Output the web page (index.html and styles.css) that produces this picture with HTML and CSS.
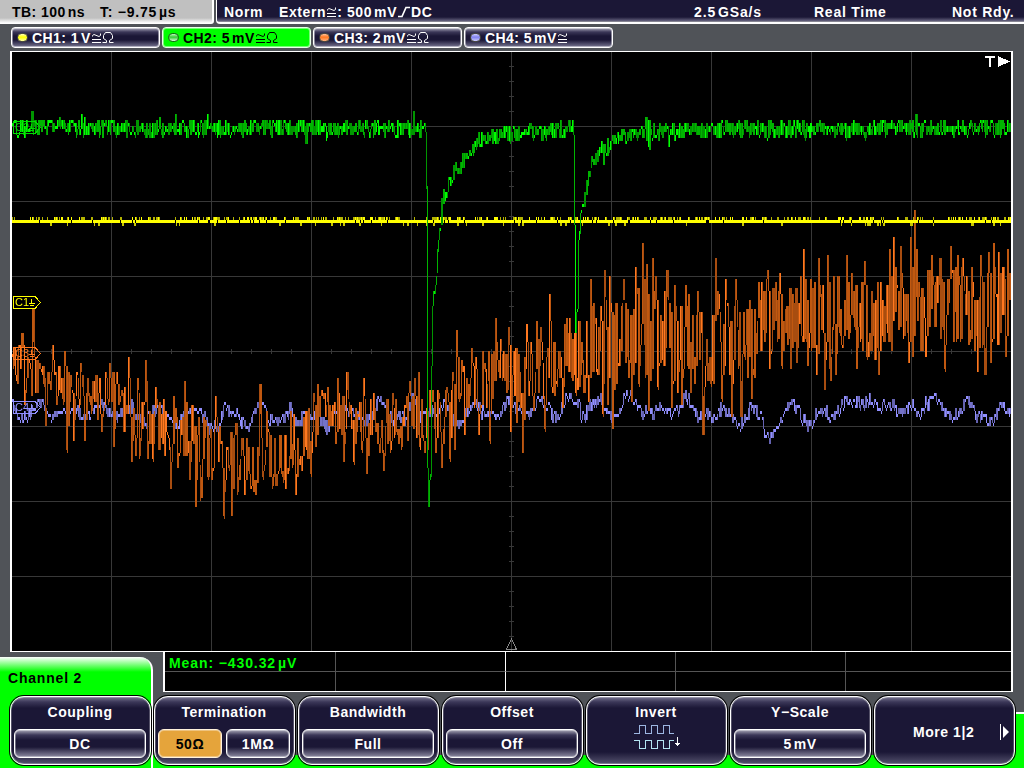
FILE: index.html
```html
<!DOCTYPE html>
<html lang="en">
<head>
<meta charset="utf-8">
<title>Oscilloscope</title>
<link rel="stylesheet" href="styles.css">
</head>
<body>
<div class="scope">
  <header class="status">
    <div class="timebase"><span class="tb">TB: 100<i></i>ns</span><span class="delay">T: −9.75<i></i>µs</span></div>
    <div class="trigger">
      <span class="norm">Norm</span>
      <span class="extern">Extern<svg class="couple" width="11" height="12"><use href="#acdc"/></svg>: 500<i></i>mV<svg class="edge" width="14" height="12"><path d="M1 10.5H5L9 1.5H13"/></svg>DC</span>
      <span class="rate">2.5<i></i>GSa/s</span><span class="mode">Real Time</span><span class="ready">Not Rdy.</span>
    </div>
  </header>
  <svg class="defs" width="0" height="0"><defs>
    <g id="acdc" fill="none" stroke="currentColor" stroke-width="1"><path d="M1.5 4.5V3.5L3 2.5L8 4.5L9.5 3.5V1.5M1 7.5H10M1 10.5H10"/></g>
    <g id="ohm" fill="none" stroke="currentColor" stroke-width="1"><path d="M.5 10.5H4.5V8.5L1.5 6.5V3.5L3.5 .5H8.5L10.5 3.5V6.5L7.5 8.5V10.5H11.5"/></g>
  </defs></svg>
  <nav class="channels">
    <div class="channel"><b class="led yellow"></b><span>CH1: 1<i></i>V</span><svg width="11" height="12"><use href="#acdc"/></svg><svg width="12" height="12"><use href="#ohm"/></svg></div>
    <div class="channel active"><b class="led green"></b><span>CH2: 5<i></i>mV</span><svg width="11" height="12"><use href="#acdc"/></svg><svg width="12" height="12"><use href="#ohm"/></svg></div>
    <div class="channel"><b class="led orange"></b><span>CH3: 2<i></i>mV</span><svg width="11" height="12"><use href="#acdc"/></svg><svg width="12" height="12"><use href="#ohm"/></svg></div>
    <div class="channel"><b class="led blue"></b><span>CH4: 5<i></i>mV</span><svg width="11" height="12"><use href="#acdc"/></svg></div>
  </nav>
  <main class="screen">
    <canvas id="plot" width="999" height="599"></canvas>
    <svg class="markers" width="999" height="599" viewBox="12 52 999 599" fill="none" shape-rendering="crispEdges">
      <g id="tags"></g>
      <path d="M985 57H995M990 57V67" stroke="#fff" stroke-width="2"/>
      <path d="M998 56V67L1010 61.5Z" fill="#fff"/>
      <path d="M511.5 639L506.5 649.5H516.5Z" stroke="#888"/>
    </svg>
  </main>
  <section class="bottom">
    <div class="tab">Channel 2</div>
    <div class="measure">
      <div class="cell">Mean: −430.32<i></i>µV</div><div class="cell"></div><div class="cell"></div><div class="cell"></div><div class="cell"></div>
      <div class="cell"></div><div class="cell"></div><div class="cell"></div><div class="cell"></div><div class="cell"></div>
    </div>
    <div class="keys">
      <div class="key"><span>Coupling</span><div class="opts"><div class="opt">DC</div></div></div>
      <div class="key"><span>Termination</span><div class="opts"><div class="opt on">50Ω</div><div class="opt">1MΩ</div></div></div>
      <div class="key"><span>Bandwidth</span><div class="opts"><div class="opt">Full</div></div></div>
      <div class="key"><span>Offset</span><div class="opts"><div class="opt">Off</div></div></div>
      <div class="key"><span>Invert</span><svg class="wave" width="48" height="26" fill="none" shape-rendering="crispEdges"><path stroke="#9db6e2" d="M0 9.5H5.5V1.5H11.5V9.5H17.5V1.5H23.5V9.5H29.5V1.5H35.5V9.5H40"/><path stroke="#b4e4f2" d="M0 16.5H5.5V24.5H11.5V16.5H17.5V24.5H23.5V16.5H29.5V24.5H35.5V16.5H40"/><path stroke="#fff" d="M43.5 13V22M41 19.5H46M42 20.5H45"/></svg></div>
      <div class="key"><span>Y−Scale</span><div class="opts"><div class="opt">5<i></i>mV</div></div></div>
      <div class="key more"><span>More 1|2</span><svg width="10" height="16"><path d="M.5 0V16" stroke="#fff"/><path d="M3 2V14L9 8Z" fill="#fff"/></svg></div>
    </div>
    <div class="corner"></div>
  </section>
</div>
<script src="traces.js"></script>
</body>
</html>
```

FILE: styles.css
```css
* { box-sizing: border-box; }
body { margin: 0; background: #505358; color: #fff; font: bold 14px/16px "Liberation Sans", Arial, sans-serif; letter-spacing: .65px; }
i { display: inline-block; width: 2px; }
.scope { width: 1024px; height: 768px; overflow: hidden; display: flex; flex-direction: column; }
.defs { position: absolute; }
.status { display: flex; gap: 2px; height: 24px; flex: none; white-space: nowrap; }
.timebase { width: 214px; background: linear-gradient(#c0c0c0 18px, #fff 23px); border-right: 2px solid #fff; border-bottom: 1px solid #fff; border-bottom-right-radius: 3px; padding: 4px 0 0 12px; display: flex; }
.tb { width: 88px; letter-spacing: .45px; }
.delay { letter-spacing: .75px; }
.timebase, .channel.active { color: #000; }
.trigger { flex: 1; display: flex; padding: 4px 0 0 7px; border-left: 1px solid #fff; border-bottom: 2px solid #fff; border-bottom-left-radius: 4px; background: linear-gradient(#1b1736 17px, #66637f 21px, #aaa 22px); }
.norm { width: 55px; }
.extern { width: 415px; letter-spacing: .6px; }
.rate { width: 120px; letter-spacing: .85px; }
.mode { width: 138px; letter-spacing: .75px; }
.ready { letter-spacing: .75px; }
.couple { vertical-align: -1px; }
.edge { fill: none; stroke: #fff; stroke-width: 1.7; vertical-align: -1px; }
.channels { display: flex; gap: 2px; height: 27px; padding: 3px 0 0 11px; flex: none; }
.channel { width: 149px; height: 21px; border: 1px solid #fff; box-shadow: inset 0 0 0 1px rgba(255,255,255,.45); border-radius: 4px; background: linear-gradient(#aaa9b9, #3b3758 4px, #1b1736 8px, #1b1736 12px, #777591); display: flex; align-items: center; padding-left: 5px; white-space: nowrap; letter-spacing: .45px; }
.channel span { margin-left: 4px; }
.channel svg { margin-top: 1px; }
.channel.active { background: #0f0; border-color: #e8ffe8; }
.led { width: 11px; height: 9px; border-radius: 5px; border: 1px solid #4d4d40; }
.yellow { background: linear-gradient(#ffb, #ff0 45%, #ffa); }
.green { background: linear-gradient(#bfb, #3c3 45%, #dfd); border-color: #166016; }
.orange { background: linear-gradient(#ffc09a, #ff7820 45%, #ffb080); }
.blue { background: linear-gradient(#ccf, #8080f0 45%, #ccf); }
.screen { flex: none; width: 1003px; height: 601px; margin-left: 10px; border: solid #fff; border-width: 1px 2px; display: grid; background: #000; }
.screen > * { grid-area: 1 / 1; display: block; }
.bottom { position: relative; height: 116px; flex: none; background: linear-gradient(#505358 103px, #0f0 103px); }
.tab { position: absolute; left: 0; top: 5px; width: 153px; height: 111px; padding: 13px 8px; border-right: 2px solid #fff; border-top-right-radius: 13px; background: linear-gradient(#fff, #0f0 15px); color: #000; letter-spacing: .8px; }
.measure { width: 850px; height: 40px; margin-left: 163px; border: 2px solid #fff; border-width: 0 2px 1px; background: #000; display: grid; grid-template: 20px 19px / 171px 170px 170px 170px auto; color: #0f0; letter-spacing: .9px; }
.cell { border: solid #555; border-width: 0 1px 1px 0; padding: 3px 4px 0; }
.cell:nth-child(5n+2) { border-right-color: #fff; }
.cell:nth-child(n+6) { border-bottom: 0; }
.cell:nth-child(5n) { border-right: 0; }
.keys { position: relative; z-index: 1; display: flex; gap: 3px; margin: 4px 0 0 10px; }
.key { width: 141px; height: 69px; border: 1px solid #fff; box-shadow: 0 0 0 1px #000, inset 0 0 0 1px rgba(255,255,255,.25); border-radius: 14px; background: linear-gradient(#77748f, #3b3758 5px, #1b1736 11px, #1b1736 55px, #55526e); padding: 7px 4px 0 3px; display: flex; flex-direction: column; align-items: center; letter-spacing: .55px; }
.opts { display: flex; gap: 4px; width: 132px; margin-top: 9px; }
.opt { flex: 1; height: 29px; border: 1px solid #fff; box-shadow: inset 0 0 0 1px rgba(255,255,255,.35); border-radius: 6px; text-align: center; padding-top: 6px; background: linear-gradient(#aaa9b9, #3b3758 5px, #1b1736 10px, #1b1736 17px, #8b89a0); }
.opt.on { background: #e5a43b; color: #000; border-color: #fff2dc; }
.wave { margin: 4px 0 0 4px; }
.more { flex-direction: row; padding: 2px 4px 0 38px; justify-content: space-between; }
.corner { position: absolute; right: 0; top: 60px; width: 10px; height: 56px; background: #0f0; border-top: 2px solid #fff; }
.tag { font: 11px "Liberation Sans", sans-serif; letter-spacing: 0; }
```

FILE: traces.js
```js
const ctx = document.getElementById('plot').getContext('2d');
ctx.translate(-12, -52);
let seed = 4127;
const rnd = () => (seed = (seed * 16807) % 2147483647) / 2147483647;
const parse = s => s.trim().split(/\s+/).map(p => p.split(',').map(Number));
function curve(points, x) {
  let i = 1;
  while (i < points.length - 1 && points[i][0] < x) i++;
  const a = points[i - 1], b = points[i];
  const t = Math.max(0, Math.min(1, (x - a[0]) / (b[0] - a[0])));
  return a[1] + (b[1] - a[1]) * t;
}
// graticule
ctx.fillStyle = '#383838';
for (let x = 111; x < 1011; x += 100) ctx.fillRect(x, 52, 1, 599);
for (let y = 126; y < 651; y += 75) ctx.fillRect(12, y, 999, 1);
for (let x = 31; x < 1011; x += 20) ctx.fillRect(x, 349, 1, 5);
for (let y = 66; y < 651; y += 15) ctx.fillRect(509, y, 5, 1);

// joins neighbouring samples; "hold" is the chance that a column repeats the previous span
function columns(ys, shades, hold) {
  let prev = ys[12], lastTop = 0, lastH = 0;
  for (let x = 12; x < 1011; x++) {
    const y = ys[x];
    let top = Math.round(Math.min(prev, y) / 3) * 3, h = Math.max(3, Math.round(Math.abs(y - prev) / 3) * 3);
    const keep = rnd() < hold(x) && lastH > h;
    if (keep) {
      const end = Math.max(top + h, lastTop + lastH);
      top = Math.min(top, lastTop);
      h = end - top;
      ctx.fillStyle = shades[rnd() < .5 ? 0 : 1];
    } else {
      ctx.fillStyle = h < 5 ? shades[2] : rnd() < .2 ? shades[2] : rnd() < .55 ? shades[1] : shades[0];
    }
    ctx.fillRect(x, top, 1, h);
    lastTop = top;
    lastH = keep ? 0 : h;
    prev = y;
  }
}

// channel 4
const blue = parse(`12,405 18,418 25,415 32,413 36,402 42,400 47,415 50,420 55,412 60,410 65,413 75,412 85,415 92,412 100,405
107,413 113,418 120,414 130,405 137,418 143,424 150,414 157,407 165,415 172,428 180,420 186,411 203,414 208,428 213,428 220,420
224,407 230,411 237,415 243,425 250,424 255,410 262,408 268,420 275,423 282,421 290,408 297,427 302,418 315,418 327,426 335,410
342,408 350,412 360,414 365,422 370,415 378,397 385,410 392,419 400,415 405,422 411,397 416,397 420,420 428,410 436,410 442,403
450,418 461,427 470,403 478,405 485,414 492,408 500,414 508,399 515,408 528,417 537,396 545,405 555,418 567,397 575,397 583,418
590,405 600,398 610,417 618,413 625,392 632,397 640,412 645,407 650,413 660,405 670,414 678,412 683,394 690,402 697,418 703,410
712,417 722,410 730,413 740,427 750,407 760,415 764,433 768,442 772,433 778,428 787,401 792,404 800,414 807,428 815,412 822,408
830,417 838,410 845,397 855,400 862,405 870,400 880,408 890,405 897,413 905,407 912,405 918,412 925,407 935,397 945,412 953,418
960,410 968,399 975,415 985,418 992,418 1000,402 1005,412 1011,412`);
const b = [];
for (let x = 12; x < 1011; x++) b[x] = curve(blue, x) + (rnd() - .5) * 14 + (rnd() < .05 ? (rnd() - .5) * 12 : 0);
columns(b, ['#6462b0', '#7472c8', '#918fff'], () => .5);

// channel 3: centre line, swing and individual peaks
const mid = parse(`12,362 35,378 60,385 100,395 140,412 170,425 200,445 230,455 270,458 300,440 320,408 340,415 370,430 400,425 430,418
460,392 500,372 540,366 580,350 620,335 700,340 760,325 800,322 860,320 920,305 1010,305`);
const swing = parse('12,24 60,24 140,30 200,36 300,36 320,28 430,32 500,36 580,44 650,50 760,50 860,46 1010,46');
const peaks = parse(`21,334 24,405 32,310 33,342 39,364 45,424 52,346 56,405 64,352 66,451 73,441 80,364 84,441 101,430 109,364 113,448 116,373 128,358
131,463 135,457 137,379 139,457 145,361 147,460 152,460 155,388 170,489 173,397 177,469 184,382 189,478 195,507 200,499 211,481 215,397
223,517 231,514 237,493 244,495 255,496 259,385 262,478 266,412 272,487 275,486 285,490 295,496 310,475 313,394 315,447 317,385 321,391
335,445 337,379 343,460 346,373 353,463 361,452 363,379 366,475 373,394 383,471 390,452 392,394 398,444 409,382 414,379 418,373 419,448
424,453 432,391 435,453 441,469 446,388 449,460 452,373 454,448 456,331 461,361 464,435 471,349 475,358 478,433 482,350 488,352 489,442
495,319 500,340 508,328 510,433 517,343 516,424 522,453 526,325 533,410 536,322 540,328 544,430 549,295 554,397 562,408 566,319 569,319
575,394 583,393 588,402 590,280 600,306 602,415 604,271 607,405 609,277 612,427 616,385 623,280 628,378 631,400 635,267 638,385 642,243
646,265 648,410 652,259 655,275 657,388 666,271 671,408 674,286 677,393 681,406 685,285 690,393 697,291 702,435 707,381 715,259 718,295
721,400 725,280 731,418 735,280 740,417 751,399 758,283 767,271 769,370 775,283 779,274 781,367 791,277 790,367 796,362 803,250 807,366
816,376 818,259 824,390 827,256 830,379 835,375 842,347 846,256 851,273 856,369 864,262 868,343 878,375 889,250 893,238 900,247 908,364
910,238 912,355 914,211 925,357 931,256 944,370 950,247 957,256 962,259 968,345 971,268 977,373 980,255 984,376 988,253 990,363 993,244
998,253 1005,358 1007,250`);
const o = [];
let drift = 0, side = 1;
for (let x = 12; x < 1011; x++) {
  drift = drift * .7 + (rnd() - .5) * .6;
  if (rnd() < (x < 560 ? .6 : .85)) side = -side;
  const v = Math.max(-1, Math.min(1, drift * .7 + side * (.1 + rnd() * .75)));
  o[x] = curve(mid, x) + v * curve(swing, x);
}
for (const [x, y] of peaks) { o[x] = y; if (x < 1008) o[x + 1] = y * .6 + curve(mid, x) * .4; }
columns(o, ['#a84d10', '#c05810', '#ff7820'], x => x < 560 ? .45 : .75);

// channel 1
let lift = false;
for (let x = 12; x < 1011; x++) {
  ctx.fillStyle = '#ff0';
  ctx.fillRect(x, 220, 1, 3);
  lift = rnd() < (lift ? .55 : .3);
  if (lift) {
    ctx.fillStyle = rnd() < .4 ? '#ff0' : '#b4b400';
    ctx.fillRect(x, 217, 1, 3);
    if (rnd() < .15) ctx.clearRect(x, 220, 1, 3);
  }
  if (rnd() < .05) { ctx.fillStyle = '#c8c800'; ctx.fillRect(x, 223, rnd() < .5 ? 2 : 1, 3); }
}

// channel 2
const green = parse(`12,128 425,128 426,187 427,468 428,506 429,480 430,475 431,365 432,305 433,290 434,292 436,275 437,250 439,228 441,205
443,193 445,199 448,185 452,175 455,168 457,178 460,168 462,160 468,153 475,145 482,138 490,137 500,134 520,133 540,132 560,130 573,129
574,225 575,333 576,312 577,310 578,240 579,232 580,212 582,205 583,200 585,188 587,180 590,165 593,160 600,148 610,144 620,138 640,134
680,130 1011,128`);
const g = [];
let flip = 1;
for (let x = 12; x < 1011; x++) {
  const quiet = (x > 425 && x < 440) || (x > 573 && x < 583);
  if (rnd() < .75) flip = -flip;
  g[x] = curve(green, x) + (quiet ? 0 : flip * (1 + rnd() * 8) + (rnd() < .08 ? (rnd() - .5) * 22 : 0));
}
columns(g, ['#009600', '#00b400', '#00ff00'], x => (x > 424 && x < 442) || (x > 572 && x < 584) ? 0 : .65);

// ground markers at the left edge
const tag = (y, n, c) => `<g stroke="${c}"><path d="M13.5 ${y - 6}H35L40.5 ${y}L35 ${y + 6}H13.5ZM31.5 ${y - 4}V${y + 1}M29 ${y + 1}H35M30 ${y + 3}H34"/><text x="15" y="${y + 3.5}" fill="${c}" stroke="none" class="tag">C${n}</text></g>`;
document.getElementById('tags').innerHTML = tag(127.5, 2, '#00dc00') + tag(302.5, 1, '#ffff00') + tag(353.5, 3, '#ff7820') + tag(407.5, 4, '#918fff');
```
